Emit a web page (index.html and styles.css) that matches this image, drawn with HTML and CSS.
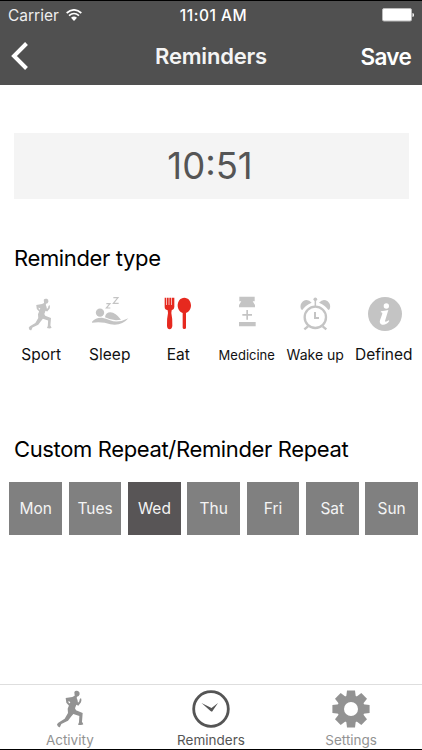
FILE: index.html
```html
<!DOCTYPE html>
<html lang="en">
<head>
	<meta charset="UTF-8">
	<title>Reminders</title>
	<link rel="stylesheet" href="styles.css">
</head>
<body>
	<svg class="defs">
		<symbol id="runner" viewBox="0 0 82 114">
			<path d="M54 6Q57 1 65 3Q71 5 70 13Q68 20 62 20L61 24Q64 29 65 38L69 34Q69 26 74 24Q77 31 74 37L66 47L60 44L56 55L59 61L79 69L77 95L81 103Q76 107 65 104L68 97L69 78L51 72L44 80L35 92L15 102L11 111Q4 114 2 103L6 98L25 86L35 69L34 56L42 36L36 33L37 38L43 42L38 47L30 38L28 24L48 21L55 17Z"/>
		</symbol>
	</svg>
	<div class="top">
		<div class="status">
			<div class="carrier">
				<span>Carrier</span>
				<svg class="wifi" viewBox="0 0 48 36"><g fill="none" stroke="#fff" stroke-width="5"><path d="M2 12Q24-7 46 12"/><path d="M9 20Q24 7 39 20"/></g><path d="M15 26Q24 19 33 26L24 36Z" fill="#fff"/></svg>
			</div>
			<span class="clock">11:01 AM</span>
			<svg class="battery" viewBox="0 0 32 14"><rect x=".5" y=".5" width="29" height="12.5" rx="1.5" fill="#fff" stroke="#bbb"/><path d="M30.5 5Q32 5 32 7T30.5 9Z" fill="#fff"/></svg>
		</div>
		<div class="nav">
			<svg class="back" viewBox="0 0 17 28"><path d="M15.5 1.5L3 14L15.5 26.5" fill="none" stroke="#fff" stroke-width="4"/></svg>
			<h1>Reminders</h1>
			<a class="save">Save</a>
		</div>
	</div>
	<div class="main">
		<div class="time">10:51</div>
		<h2 class="type-title">Reminder type</h2>
		<ul class="types">
			<li><svg class="run"><use href="#runner"/></svg><p>Sport</p></li>
			<li>
				<svg viewBox="0 0 120 120"><circle cx="30" cy="56" r="12.5"/><path d="M45 70Q47 55 61 55Q77 56 93 77Q67 82 45 70Z"/><path d="M6 83Q17 70 36 71Q48 73 60 79Q84 89 115 73Q95 97 61 91Q38 82 6 86Z"/><path d="M49 29H60L49 42H61M70 11H84L70 28H86" fill="none" stroke="#c4c4c4" stroke-width="3.5"/></svg>
				<p class="sleep">Sleep</p>
			</li>
			<li class="on">
				<svg viewBox="0 0 120 120"><path d="M20 11H25V33H27V11H32V33H34V11H39V33H41V11H49V39Q49 47 41 49L40 57Q44 75 43 96Q41 106 35 106Q28 106 27 96Q26 75 30 57L29 49Q20 47 20 39Z"/><path d="M79 11C91 11 99 22 99 34C99 46 92 55 84 57V101Q84 105 79 105T74 101V57C66 55 59 46 59 34C59 22 67 11 79 11Z"/></svg>
				<p class="eat">Eat</p>
			</li>
			<li>
				<svg viewBox="0 0 120 120"><path d="M37 8H83V22H37ZM43 22H77L84 33V40H36V33ZM36 84H86V97H36ZM58 48H63V60H75V65H63V77H58V65H46V60H58Z"/></svg>
				<p class="medicine">Medicine</p>
			</li>
			<li>
				<svg viewBox="0 0 120 120"><g fill="none" stroke="#c4c4c4"><circle cx="61" cy="70" r="32" stroke-width="7"/><path d="M60 54V72H72" stroke-width="6"/><path d="M39 97L28 106M83 97L94 106" stroke-width="7"/><path d="M61 18V38" stroke-width="4.5"/></g><circle cx="61" cy="16" r="5.5"/><path d="M18 46Q13 31 24 22Q38 13 50 26Q30 35 22 48ZM104 46Q109 31 98 22Q84 13 72 26Q92 35 100 48Z"/></svg>
				<p class="wake">Wake up</p>
			</li>
			<li>
				<svg viewBox="0 0 120 120"><circle cx="63" cy="60" r="51"/><circle cx="67" cy="36" r="8" fill="#fff"/><path d="M51 52Q61 51 73 48L63 81Q64 86 74 79L76 81Q67 94 54 92Q45 89 48 79L55 59Q56 55 50 55Z" fill="#fff"/></svg>
				<p class="defined">Defined</p>
			</li>
		</ul>
		<h2 class="repeat-title">Custom Repeat/Reminder Repeat</h2>
		<ul class="days">
			<li>Mon</li>
			<li>Tues</li>
			<li class="on">Wed</li>
			<li>Thu</li>
			<li>Fri</li>
			<li>Sat</li>
			<li>Sun</li>
		</ul>
	</div>
	<div class="tabs">
		<a class="activity"><svg><use href="#runner"/></svg><span>Activity</span></a>
		<a class="on"><svg viewBox="0 0 38 38"><circle cx="19" cy="19" r="17.3" fill="none" stroke="#555" stroke-width="2.8"/><path d="M9.5 13L19.5 18L26 13L20 21.8L18.5 21Z"/></svg><span>Reminders</span></a>
		<a class="settings">
			<svg viewBox="-19 -19 38 38"><g id="teeth"><path d="M-4.8-12L-4-18.6H4L4.8-12V12L4 18.6H-4L-4.8 12Z"/><path d="M-4.8-12L-4-18.6H4L4.8-12V12L4 18.6H-4L-4.8 12Z" transform="rotate(90)"/></g><use href="#teeth" transform="rotate(45)"/><circle r="13.7"/><circle r="7" fill="#fff"/></svg>
			<span>Settings</span>
		</a>
	</div>
</body>
</html>
```
FILE: styles.css
```css
*{box-sizing:border-box;}
body,ul,li,p,h1,h2{margin:0;padding:0;}
li{list-style:none;}
body{width:422px;height:750px;display:flex;flex-direction:column;background:#fff;color:#111;font-family:Inter,"Liberation Sans",sans-serif;border-bottom:1px solid #000;overflow:hidden;white-space:nowrap;}
svg{display:block;}
.defs{width:0;height:0;position:absolute;}
.top{height:85px;background:#505050;border-top:1px solid #000;color:#fff;}
.status{height:28px;display:grid;grid-template-columns:1fr auto 1fr;align-items:center;padding:0 8px;font-size:15.5px;}
.carrier{display:flex;align-items:center;gap:7px;color:#eee;}
.wifi{width:16px;height:12px;}
.clock{font-weight:500;letter-spacing:.5px;padding-left:5px;}
.battery{width:32px;height:14px;justify-self:end;}
.nav{height:54px;display:grid;grid-template-columns:1fr auto 1fr;align-items:center;padding:0 11px;}
.back{width:17px;height:28px;}
h1{font-size:22px;font-weight:600;letter-spacing:-.2px;color:#f4f4f4;}
.save{justify-self:end;font-size:22.5px;font-weight:600;letter-spacing:-.7px;}
.main{flex:1;}
.time{height:66px;margin:48px 13px 0 14px;padding-right:3px;background:#f4f4f4;color:#555;font-size:36.5px;line-height:66px;text-align:center;}
h2{font-size:22px;font-weight:400;line-height:28px;letter-spacing:-.36px;padding-left:14px;color:#000;}
.type-title{margin-top:45px;}
.types{display:grid;grid-template-columns:repeat(6,1fr);padding:0 4px 0 7px;margin-top:22px;}
.types li{display:flex;flex-direction:column;align-items:center;fill:#c4c4c4;}
.types svg{width:40px;height:40px;}
.types .run{width:24px;height:33px;margin:4px 2px 3px 0;}
.types .on{fill:#e6291f;}
.types p{margin-top:10px;font-size:15.5px;line-height:22px;}
.types .medicine{font-size:13px;}
.types .wake{font-size:14px;}
.repeat-title{margin-top:69px;}
.days{display:grid;grid-template-columns:repeat(7,1fr);gap:6.5px;padding:0 4px 0 9.4px;margin-top:19px;}
.days li{height:53px;background:#808080;color:#f4f4f4;font-size:15.5px;line-height:53px;text-align:center;}
.days .on{background:#585556;}
.tabs{height:65px;display:grid;grid-template-columns:repeat(3,1fr);border-top:1px solid #dedede;}
.tabs a{display:flex;flex-direction:column;align-items:center;padding-top:5px;color:#929292;fill:#929292;font-size:13.5px;line-height:18px;}
.tabs svg{width:38px;height:38px;margin-bottom:3px;}
.tabs .on{color:#555;fill:#555;}
.tabs .activity,.tabs .settings{padding-right:1px;}
```
